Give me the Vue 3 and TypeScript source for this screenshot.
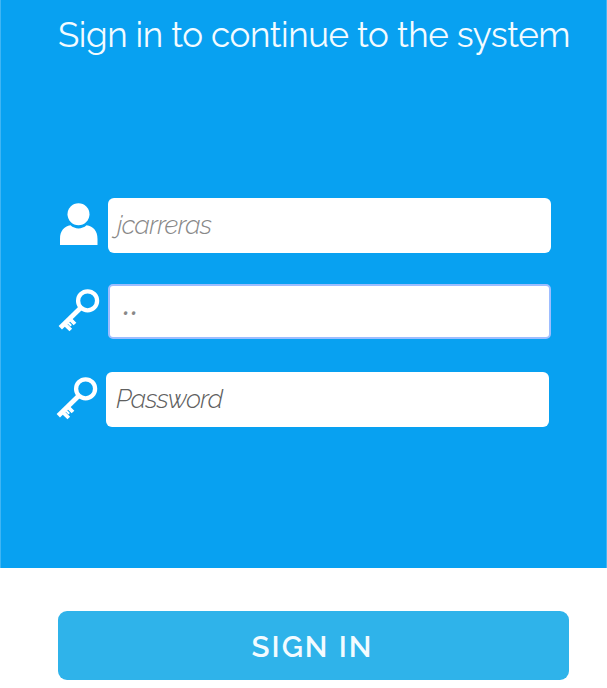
<script setup lang="ts">
import { ref } from 'vue'

interface Field {
  id: string
  kind: 'user' | 'key'
  label: string
  placeholder: string
}

const fields: Field[] = [
  { id: 'user', kind: 'user', label: 'User', placeholder: 'jcarreras' },
  { id: 'code', kind: 'key', label: 'Code', placeholder: '••' },
  { id: 'password', kind: 'key', label: 'Password', placeholder: 'Password' },
]

const values = ref<Record<string, string>>({ user: '', code: '', password: '' })
</script>

<template>
  <form class="login" @submit.prevent>
    <section class="panel">
      <h1 class="title">Sign in to continue to the system</h1>
      <div class="fields">
        <div v-for="field in fields" :key="field.id" class="row" :class="`row-${field.id}`">
          <svg v-if="field.kind === 'user'" class="icon" viewBox="0 0 40 44" aria-hidden="true">
            <circle cx="20.500" cy="13.300" r="11" fill="#fff" />
            <path d="M2 44V38C2 30 6 25.500 12.500 24.300C17 28.500 24 28.500 28.500 24.300C35.500 25.500 39.500 30 39.500 38V44Z" fill="#fff" />
          </svg>
          <svg v-else class="icon" viewBox="0 0 40 44" fill="none" stroke="#fff" aria-hidden="true">
            <circle cx="29.600" cy="13.800" r="9.500" stroke-width="4.300" />
            <path d="M22.800 20.800L2.300 40.800" stroke-width="4.800" />
            <path d="M11.500 31.500L17 37M6.500 36.800L12.800 43" stroke-width="3.800" />
            <path d="M9.500 35L13.200 38.700" stroke-width="2" />
          </svg>
          <input
            v-model="values[field.id]"
            class="input"
            :type="field.id === 'user' ? 'text' : 'password'"
            :placeholder="field.placeholder"
            :aria-label="field.label"
          />
        </div>
      </div>
    </section>
    <button class="submit" type="submit">SIGN IN</button>
  </form>
</template>

<style>
body {
  background: #fff;
}
</style>

<style scoped>
.login {
  height: 688px;
  overflow: hidden;
  font-family: Raleway, Lato, sans-serif;
}

.panel {
  box-sizing: border-box;
  height: 568px;
  padding: 15px 0 0 57px;
  background: #08a1f1;
  border: solid #40b5f3;
  border-width: 0 1px;
}

.title {
  margin: 0;
  font-size: 35px;
  font-weight: 400;
  line-height: 40px;
  letter-spacing: -0.450px;
  white-space: nowrap;
  color: #f3fbff;
}

.fields {
  display: flex;
  flex-direction: column;
  gap: 33px;
  padding-top: 143px;
}

.row {
  display: flex;
  align-items: center;
  gap: 10px;
  height: 55px;
}

.row-code {
  margin-top: -2px;
}

.row-password {
  margin-left: -2px;
}

.icon {
  width: 40px;
  height: 44px;
  flex: none;
  margin-bottom: 6px;
  overflow: visible;
}

.input {
  box-sizing: border-box;
  width: 443px;
  height: 55px;
  padding: 0 3px 1px;
  background: #fff;
  border: 0;
  border-radius: 6px;
  outline: 0;
  font-family: inherit;
  font-size: 26px;
  font-style: italic;
  font-weight: 300;
  letter-spacing: -0.700px;
  text-indent: 6px;
  color: #777;
}

.input::placeholder {
  color: #888;
  opacity: 1;
}

.row-code .input {
  padding: 2px 6px 0;
  border: 2px solid #9dbdff;
  border-radius: 5px;
  font-size: 20px;
  font-weight: 400;
  letter-spacing: 1.200px;
}

.row-password .input {
  padding: 0 4px 1px;
}

.row-password .input::placeholder {
  color: #606060;
}

.submit {
  display: block;
  width: 511px;
  height: 69px;
  margin: 43px 0 0 58px;
  padding: 1px 2px 0 0;
  background: #2fb3ea;
  border: 0;
  border-radius: 9px;
  font-family: inherit;
  font-size: 29.500px;
  font-weight: 600;
  letter-spacing: 2px;
  color: #f3fbff;
}
</style>
